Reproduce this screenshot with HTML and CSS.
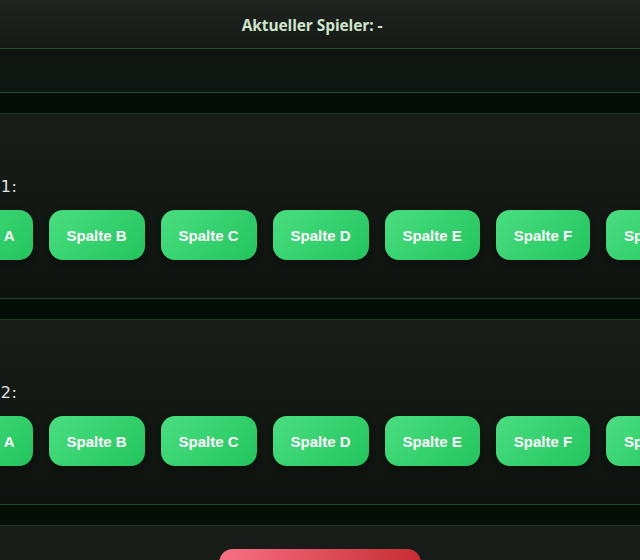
FILE: index.html
```html
<!DOCTYPE html>
<html lang="de">
<head>
<meta charset="utf-8">
<title>Vier gewinnt</title>
<link rel="stylesheet" href="styles.css">
</head>
<body>
  <header class="topbar">
    <span class="current">Aktueller Spieler: -</span>
  </header>
  <div class="status"></div>

  <section class="card">
    <div class="panel">
      <div class="label">Spieler 1:</div>
      <div class="columns">
        <button class="col-btn">Spalte A</button>
        <button class="col-btn">Spalte B</button>
        <button class="col-btn">Spalte C</button>
        <button class="col-btn">Spalte D</button>
        <button class="col-btn">Spalte E</button>
        <button class="col-btn">Spalte F</button>
        <button class="col-btn">Spalte G</button>
      </div>
    </div>
  </section>

  <section class="card">
    <div class="panel">
      <div class="label">Spieler 2:</div>
      <div class="columns">
        <button class="col-btn">Spalte A</button>
        <button class="col-btn">Spalte B</button>
        <button class="col-btn">Spalte C</button>
        <button class="col-btn">Spalte D</button>
        <button class="col-btn">Spalte E</button>
        <button class="col-btn">Spalte F</button>
        <button class="col-btn">Spalte G</button>
      </div>
    </div>
  </section>

  <section class="actions">
    <button class="reset-btn">Neues Spiel</button>
  </section>
</body>
</html>
```

FILE: styles.css
```css
* {
  box-sizing: border-box;
}

html, body {
  margin: 0;
  padding: 0;
}

body {
  background: #050d07;
  font-family: "Open Sans", "Noto Sans", sans-serif;
  color: #e5e7eb;
  display: flex;
  flex-direction: column;
  gap: 20px;
  overflow: hidden;
  height: 560px;
}

body > * {
  flex-shrink: 0;
}

.topbar {
  height: 49px;
  display: flex;
  align-items: center;
  justify-content: center;
  padding: 2px 16px 0 0;
  background: linear-gradient(180deg, #1f2421 0%, #161a17 100%);
  border-bottom: 1px solid #24502f;
  margin-bottom: -20px;
}

.current {
  font-size: 15.5px;
  font-weight: 700;
  color: #cfe6cd;
  letter-spacing: -0.1px;
}

.status {
  height: 44px;
  background: #0f1511;
  border-bottom: 1px solid #24502f;
}

.card {
  height: 186px;
  background: linear-gradient(180deg, #181d1a 0%, #0e130f 100%);
  border-top: 1px solid #1d3a25;
  border-bottom: 1px solid #1f4a2a;
  display: flex;
  justify-content: center;
  padding-top: 62px;
}

.panel {
  flex: none;
  display: flex;
  flex-direction: column;
  align-items: flex-start;
  gap: 12px;
}

.label {
  font-family: "DejaVu Sans", "Open Sans", sans-serif;
  font-size: 16px;
  line-height: 22px;
  letter-spacing: 0.4px;
  color: #e3e5e3;
}

.columns {
  display: flex;
  gap: 16px;
}

.col-btn {
  flex: none;
  height: 50px;
  padding: 0 18px;
  border: none;
  border-radius: 14px;
  background: linear-gradient(135deg, #4ade80 0%, #22c55e 100%);
  box-shadow: 0 2px 6px rgba(0, 0, 0, 0.35);
  color: #ffffff;
  font-family: "Liberation Sans", Arial, sans-serif;
  font-size: 15px;
  font-weight: 700;
  white-space: nowrap;
}

.actions {
  flex: 1 0 auto;
  background: #171c19;
  border-top: 1px solid #1d3a25;
  display: flex;
  justify-content: center;
  align-items: flex-start;
  padding-top: 23px;
}

.reset-btn {
  flex: none;
  width: 202px;
  height: 50px;
  border: none;
  border-radius: 14px;
  background: linear-gradient(100deg, #f87185 0%, #c62a2f 100%);
  color: #ffffff;
  font-family: "Liberation Sans", Arial, sans-serif;
  font-size: 15px;
  font-weight: 700;
}
```
